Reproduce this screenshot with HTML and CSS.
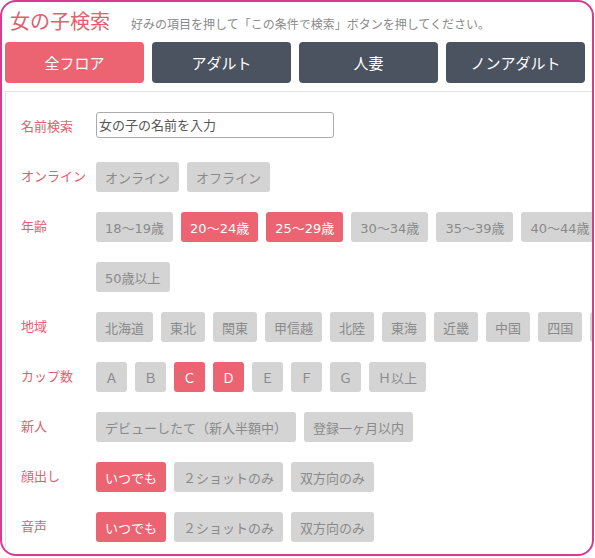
FILE: index.html
```html
<!DOCTYPE html>
<html lang="ja">

<head>
    <meta charset="UTF-8">
    <meta name="viewport" content="width=device-width, initial-scale=1.0">
    <title>女の子検索</title>
    <link rel="stylesheet" href="styles.css">
</head>

<body>
    <div class="search-box">
        <div class="search-head">
            <h1 class="search-title">女の子検索</h1>
            <p class="search-note">好みの項目を押して「この条件で検索」ボタンを押してください。</p>
        </div>

        <div class="floor-tabs">
            <button class="tab is-active">全フロア</button>
            <button class="tab">アダルト</button>
            <button class="tab">人妻</button>
            <button class="tab">ノンアダルト</button>
        </div>

        <div class="filter-panel">
            <div class="filter-row">
                <span class="filter-label">名前検索</span>
                <input type="text" class="name-input" placeholder="女の子の名前を入力">
            </div>
            <div class="filter-row">
                <span class="filter-label">オンライン</span>
                <div class="chips">
                    <button class="chip">オンライン</button>
                    <button class="chip">オフライン</button>
                </div>
            </div>
            <div class="filter-row">
                <span class="filter-label">年齢</span>
                <div class="chips">
                    <button class="chip">18～19歳</button>
                    <button class="chip is-on">20～24歳</button>
                    <button class="chip is-on">25～29歳</button>
                    <button class="chip">30～34歳</button>
                    <button class="chip">35～39歳</button>
                    <button class="chip">40～44歳</button>
                    <button class="chip">45～49歳</button>
                    <button class="chip">50歳以上</button>
                </div>
            </div>
            <div class="filter-row">
                <span class="filter-label">地域</span>
                <div class="chips">
                    <button class="chip">北海道</button>
                    <button class="chip">東北</button>
                    <button class="chip">関東</button>
                    <button class="chip">甲信越</button>
                    <button class="chip">北陸</button>
                    <button class="chip">東海</button>
                    <button class="chip">近畿</button>
                    <button class="chip">中国</button>
                    <button class="chip">四国</button>
                    <button class="chip">九州</button>
                </div>
            </div>
            <div class="filter-row">
                <span class="filter-label">カップ数</span>
                <div class="chips">
                    <button class="chip">Ａ</button>
                    <button class="chip">Ｂ</button>
                    <button class="chip is-on">Ｃ</button>
                    <button class="chip is-on">Ｄ</button>
                    <button class="chip">Ｅ</button>
                    <button class="chip">Ｆ</button>
                    <button class="chip">Ｇ</button>
                    <button class="chip">Ｈ以上</button>
                </div>
            </div>
            <div class="filter-row">
                <span class="filter-label">新人</span>
                <div class="chips">
                    <button class="chip">デビューしたて（新人半額中）</button>
                    <button class="chip">登録一ヶ月以内</button>
                </div>
            </div>
            <div class="filter-row">
                <span class="filter-label">顔出し</span>
                <div class="chips">
                    <button class="chip is-on">いつでも</button>
                    <button class="chip">２ショットのみ</button>
                    <button class="chip">双方向のみ</button>
                </div>
            </div>
            <div class="filter-row">
                <span class="filter-label">音声</span>
                <div class="chips">
                    <button class="chip is-on">いつでも</button>
                    <button class="chip">２ショットのみ</button>
                    <button class="chip">双方向のみ</button>
                </div>
            </div>
        </div>
    </div>
</body>

</html>
```

FILE: styles.css
```css
body {
    margin: 0;
    font-family: "DejaVu Sans", "Noto Sans CJK JP", sans-serif;
    background: #fff;
}

.search-box {
    width: 594px;
    height: 556px;
    box-sizing: border-box;
    border: 2px solid #d83a90;
    border-radius: 16px;
    overflow: hidden;
}

.search-head {
    display: flex;
    align-items: baseline;
    gap: 21px;
    height: 40px;
    padding-left: 8px;
    box-sizing: border-box;
}

.search-title {
    margin: 0;
    padding-top: 6px;
    font-size: 20px;
    line-height: 28px;
    font-weight: normal;
    color: #e0606f;
}

.search-note {
    margin: 0;
    font-size: 12px;
    color: #8a8a8a;
}

.floor-tabs {
    display: flex;
    gap: 8px;
    margin-left: 3px;
}

.tab {
    width: 139px;
    height: 41px;
    border: none;
    border-radius: 4px;
    background-color: #4b5360;
    color: #fff;
    font-family: inherit;
    font-size: 15px;
    cursor: pointer;
}

.tab.is-active {
    background-color: #ec6472;
}

.filter-panel {
    width: 712px;
    margin: 8px 0 0 3px;
    padding: 20px 0 0 15px;
    box-sizing: border-box;
    border: 1px solid #dfe3e7;
}

.filter-row {
    display: flex;
    align-items: flex-start;
    margin-bottom: 20px;
}

.filter-label {
    width: 75px;
    flex-shrink: 0;
    font-size: 13px;
    line-height: 30px;
    color: #e2606e;
}

.name-input {
    width: 238px;
    height: 26px;
    box-sizing: border-box;
    padding: 0 2px;
    border: 1px solid #ababab;
    border-radius: 3px;
    font-family: inherit;
    font-size: 13px;
}

.name-input::placeholder {
    color: #555;
}

.chips {
    flex: 1;
    display: flex;
    flex-wrap: wrap;
    gap: 20px 8px;
}

.chip {
    height: 30px;
    padding: 0 9px;
    border: none;
    border-radius: 3px;
    background-color: #d4d4d4;
    color: #8a8a8a;
    font-family: inherit;
    font-size: 13px;
    white-space: nowrap;
    cursor: pointer;
}

.chip.is-on {
    background-color: #ec6472;
    color: #fff;
}
```
